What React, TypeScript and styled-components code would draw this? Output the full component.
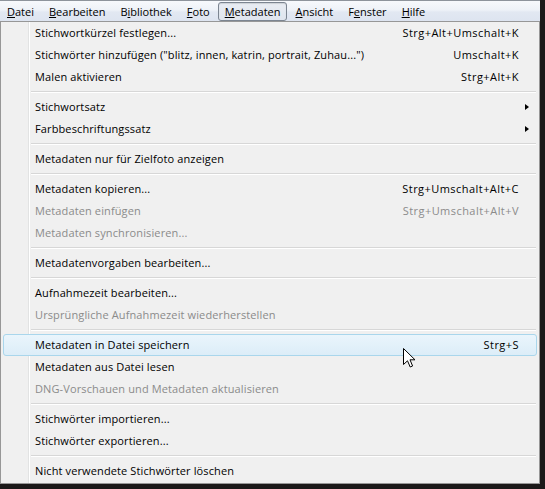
import React from "react";
import styled, { createGlobalStyle, css } from "styled-components";

const GlobalStyle = createGlobalStyle`
  html, body {
    margin: 0;
    padding: 0;
    background: #1b1919;
  }
  body {
    font-family: "Open Sans", "Noto Sans", sans-serif;
    font-size: 11px;
    color: #000;
  }
`;

const Window = styled.div`
  position: relative;
  width: 540px;
  height: 489px;
`;

const MenuBar = styled.div`
  display: flex;
  align-items: center;
  gap: 1px;
  height: 20px;
  border-top: 1px solid #8e949c;
  background: linear-gradient(to bottom, #f7f9fc 0%, #eef2f8 45%, #e2e8f2 55%, #dde4f0 100%);
`;

const BarItem = styled.div<{ $active?: boolean }>`
  height: 17px;
  display: flex;
  align-items: center;
  padding: 0 6px;
  border: 1px solid transparent;
  border-radius: 3px;
  margin-top: 1px;
  line-height: 1;
  ${(p) =>
    p.$active &&
    css`
      border-color: #7c8591;
      background: linear-gradient(to bottom, #e9edf3 0%, #dfe5ee 100%);
      box-shadow: inset 0 1px 1px rgba(0, 0, 0, 0.12);
    `}
`;

const Dropdown = styled.div`
  display: flex;
  flex-direction: column;
  border: 1px solid #979797;
  padding: 0 2px 1px;
  background:
    linear-gradient(
      to right,
      transparent 27px,
      #e2e3e3 27px,
      #e2e3e3 28px,
      #ffffff 28px,
      #ffffff 29px,
      transparent 29px
    ),
    #f0f0f0;
`;

const Item = styled.div<{ $disabled?: boolean; $hot?: boolean }>`
  box-sizing: border-box;
  display: grid;
  grid-template-columns: 1fr auto 17px;
  align-items: center;
  height: 22px;
  padding: 0 0 1px 31px;
  border: 1px solid transparent;
  border-radius: 3px;
  color: ${(p) => (p.$disabled ? "#8b8b8b" : "#000")};
  white-space: nowrap;
  ${(p) =>
    p.$hot &&
    css`
      border-color: #a9d6ec;
      background: linear-gradient(to bottom, #eaf5fc 0%, #dcedf8 100%);
    `}
`;

const Label = styled.span`
  letter-spacing: 0.12px;
`;

const Shortcut = styled.span`
  text-align: right;
  letter-spacing: 0.45px;
`;

const ArrowCell = styled.span`
  display: flex;
  align-items: center;
  padding-left: 6px;
`;

const Arrow = styled.span`
  width: 0;
  height: 0;
  border-top: 3.5px solid transparent;
  border-bottom: 3.5px solid transparent;
  border-left: 4px solid #000;
`;

const Separator = styled.div`
  height: 8px;
  display: flex;
  align-items: center;
  padding-left: 28px;
  padding-right: 1px;
`;

const SepLine = styled.div`
  flex: 1;
  height: 1px;
  background: #d7d7d7;
  border-bottom: 1px solid #ffffff;
`;

const Cursor = styled.svg`
  position: absolute;
  left: 403px;
  top: 348px;
  pointer-events: none;
`;

type Entry =
  | { sep: true }
  | { label: string; shortcut?: string; sub?: boolean; disabled?: boolean; hot?: boolean };

const entries: Entry[] = [
  { label: "Stichwortkürzel festlegen...", shortcut: "Strg+Alt+Umschalt+K" },
  { label: 'Stichwörter hinzufügen ("blitz, innen, katrin, portrait, Zuhau...")', shortcut: "Umschalt+K" },
  { label: "Malen aktivieren", shortcut: "Strg+Alt+K" },
  { sep: true },
  { label: "Stichwortsatz", sub: true },
  { label: "Farbbeschriftungssatz", sub: true },
  { sep: true },
  { label: "Metadaten nur für Zielfoto anzeigen" },
  { sep: true },
  { label: "Metadaten kopieren...", shortcut: "Strg+Umschalt+Alt+C" },
  { label: "Metadaten einfügen", shortcut: "Strg+Umschalt+Alt+V", disabled: true },
  { label: "Metadaten synchronisieren...", disabled: true },
  { sep: true },
  { label: "Metadatenvorgaben bearbeiten..." },
  { sep: true },
  { label: "Aufnahmezeit bearbeiten..." },
  { label: "Ursprüngliche Aufnahmezeit wiederherstellen", disabled: true },
  { sep: true },
  { label: "Metadaten in Datei speichern", shortcut: "Strg+S", hot: true },
  { label: "Metadaten aus Datei lesen" },
  { label: "DNG-Vorschauen und Metadaten aktualisieren", disabled: true },
  { sep: true },
  { label: "Stichwörter importieren..." },
  { label: "Stichwörter exportieren..." },
  { sep: true },
  { label: "Nicht verwendete Stichwörter löschen" },
];

const bar: { pre: string; acc: string; post: string; active?: boolean }[] = [
  { pre: "", acc: "D", post: "atei" },
  { pre: "", acc: "B", post: "earbeiten" },
  { pre: "B", acc: "i", post: "bliothek" },
  { pre: "", acc: "F", post: "oto" },
  { pre: "", acc: "M", post: "etadaten", active: true },
  { pre: "", acc: "A", post: "nsicht" },
  { pre: "F", acc: "e", post: "nster" },
  { pre: "", acc: "H", post: "ilfe" },
];

export default function App() {
  return (
    <>
      <GlobalStyle />
      <Window>
        <MenuBar>
          {bar.map((b) => (
            <BarItem key={b.pre + b.acc + b.post} $active={b.active}>
              <span>
                {b.pre}
                <u>{b.acc}</u>
                {b.post}
              </span>
            </BarItem>
          ))}
        </MenuBar>
        <Dropdown>
          {entries.map((e, i) =>
            "sep" in e ? (
              <Separator key={i}>
                <SepLine />
              </Separator>
            ) : (
              <Item key={i} $disabled={e.disabled} $hot={e.hot}>
                <Label>{e.label}</Label>
                <Shortcut>{e.shortcut ?? ""}</Shortcut>
                <ArrowCell>{e.sub ? <Arrow /> : null}</ArrowCell>
              </Item>
            )
          )}
        </Dropdown>
        <Cursor width="13" height="21" viewBox="0 0 13 21">
          <path
            d="M0.5 0.5 L0.5 16.5 L4.5 12.8 L7.2 19 L9.6 18 L7 11.8 L12 11.8 Z"
            fill="#ffffff"
            stroke="#000000"
            strokeWidth="1"
            strokeLinejoin="miter"
          />
        </Cursor>
      </Window>
    </>
  );
}
